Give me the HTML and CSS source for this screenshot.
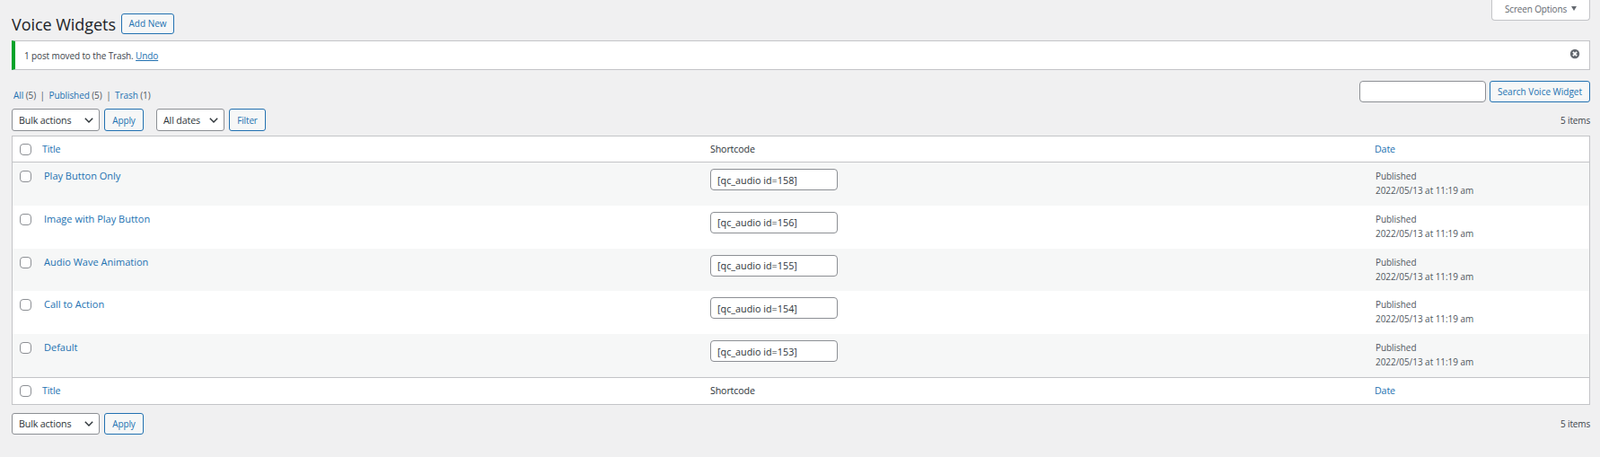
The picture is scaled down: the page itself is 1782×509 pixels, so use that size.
FILE: index.html
```html
<!DOCTYPE html>
<html lang="en">
<head>
<meta charset="utf-8">
<title>Voice Widgets</title>
<link rel="stylesheet" href="styles.css">
</head>
<body>
<div class="wrap">
  <div class="screen-meta"><button class="screen-tab">Screen Options <span class="tri"></span></button></div>
  <div class="heading">
    <h1>Voice Widgets</h1>
    <a class="btn btn-add" href="#">Add New</a>
  </div>
  <div class="notice">
    <p>1 post moved to the Trash. <a href="#">Undo</a></p>
    <svg class="dismiss" viewBox="0 0 12 12" width="12" height="12" aria-hidden="true"><circle cx="6" cy="6" r="5.2" fill="#646970"/><path d="M3.9 3.9l4.2 4.2M8.1 3.9l-4.2 4.2" stroke="#fff" stroke-width="1.7"/></svg>
  </div>
  <div class="filters-row">
    <ul class="subsub">
      <li><a href="#">All</a> <span class="count">(5)</span></li>
      <li class="sep">|</li>
      <li><a href="#">Published</a> <span class="count">(5)</span></li>
      <li class="sep">|</li>
      <li><a href="#">Trash</a> <span class="count">(1)</span></li>
    </ul>
    <div class="search">
      <input class="search-input" type="text" aria-label="Search">
      <a class="btn btn-search" href="#">Search Voice Widget</a>
    </div>
  </div>
  <div class="tablenav tablenav-top">
    <div class="select select-bulk">Bulk actions<svg class="chev" viewBox="0 0 10 6" width="10" height="6"><path d="M.8.8L5 5l4.2-4.2" fill="none" stroke="#2c3338" stroke-width="1.4"/></svg></div>
    <a class="btn btn-apply" href="#">Apply</a>
    <div class="select select-dates">All dates<svg class="chev" viewBox="0 0 10 6" width="10" height="6"><path d="M.8.8L5 5l4.2-4.2" fill="none" stroke="#2c3338" stroke-width="1.4"/></svg></div>
    <a class="btn btn-filter" href="#">Filter</a>
    <span class="items">5 items</span>
  </div>
  <table class="list">
    <colgroup><col class="c-cb"><col class="c-title"><col class="c-code"><col class="c-date"></colgroup>
    <thead>
      <tr><th class="cb"><span class="check"></span></th><th><a href="#">Title</a></th><th>Shortcode</th><th><a href="#">Date</a></th></tr>
    </thead>
    <tbody>
      <tr class="alt"><td class="cb"><span class="check"></span></td><td class="name"><a href="#">Play Button Only</a></td><td class="code-cell"><input class="code" type="text" value="[qc_audio id=158]" readonly></td><td class="date">Published<br>2022/05/13 at 11:19 am</td></tr>
      <tr><td class="cb"><span class="check"></span></td><td class="name"><a href="#">Image with Play Button</a></td><td class="code-cell"><input class="code" type="text" value="[qc_audio id=156]" readonly></td><td class="date">Published<br>2022/05/13 at 11:19 am</td></tr>
      <tr class="alt"><td class="cb"><span class="check"></span></td><td class="name"><a href="#">Audio Wave Animation</a></td><td class="code-cell"><input class="code" type="text" value="[qc_audio id=155]" readonly></td><td class="date">Published<br>2022/05/13 at 11:19 am</td></tr>
      <tr><td class="cb"><span class="check"></span></td><td class="name"><a href="#">Call to Action</a></td><td class="code-cell"><input class="code" type="text" value="[qc_audio id=154]" readonly></td><td class="date">Published<br>2022/05/13 at 11:19 am</td></tr>
      <tr class="alt"><td class="cb"><span class="check"></span></td><td class="name"><a href="#">Default</a></td><td class="code-cell"><input class="code" type="text" value="[qc_audio id=153]" readonly></td><td class="date">Published<br>2022/05/13 at 11:19 am</td></tr>
    </tbody>
    <tfoot>
      <tr><th class="cb"><span class="check"></span></th><th><a href="#">Title</a></th><th>Shortcode</th><th><a href="#">Date</a></th></tr>
    </tfoot>
  </table>
  <div class="tablenav tablenav-bottom">
    <div class="select select-bulk">Bulk actions<svg class="chev" viewBox="0 0 10 6" width="10" height="6"><path d="M.8.8L5 5l4.2-4.2" fill="none" stroke="#2c3338" stroke-width="1.4"/></svg></div>
    <a class="btn btn-apply" href="#">Apply</a>
    <span class="items">5 items</span>
  </div>
</div>
</body>
</html>
```
FILE: styles.css
```css
* { box-sizing: border-box; }
html, body { margin: 0; padding: 0; }
body {
  background: #f0f0f1;
  color: #3c434a;
  font-family: "Open Sans", "Noto Sans", sans-serif;
  font-size: 10px;
  letter-spacing: -0.15px;
  height: 509px;
  overflow: hidden;
}
a { color: #2271b1; text-decoration: none; }
.wrap { padding: 0 11px 0 13px; }

.screen-meta { display: flex; justify-content: flex-end; height: 0; }
.screen-tab {
  width: 110px; height: 23px; background: #fff; color: #646970;
  border: 1px solid #c3c4c7; border-top: 0; border-radius: 0 0 4px 4px;
  font: inherit; letter-spacing: inherit; padding: 0 0 3px 0; display: flex; align-items: center; justify-content: center; gap: 5px;
}
.tri { width: 0; height: 0; border-left: 3.5px solid transparent; border-right: 3.5px solid transparent; border-top: 5px solid #646970; }

.heading { display: flex; align-items: center; height: 45px; padding-top: 7px; }
h1 { margin: 2px 0 0 0; font-size: 18px; font-weight: 400; letter-spacing: -0.05px; color: #1d2327; line-height: 24px; width: 122px; white-space: nowrap; }

.btn {
  display: flex; align-items: center; justify-content: center;
  border: 1px solid #2271b1; border-radius: 3px; background: #f6f7f7; color: #2271b1;
  white-space: nowrap;
}
.btn-add { width: 59px; height: 23px; letter-spacing: 0; }
.notice {
  height: 33px; background: #fff; border: 1px solid #c3c4c7; border-left: 4px solid #00a32a;
  display: flex; align-items: center; justify-content: space-between; padding: 0 10px 3px 10px;
}
.notice p { margin: 4px 0 0 0; letter-spacing: -0.12px; }
.notice a { text-decoration: underline; }

.filters-row { display: flex; justify-content: space-between; height: 43px; padding-top: 12px; }
.subsub { list-style: none; display: flex; gap: 4.5px; margin: 7px 0 0 2px; padding: 0; line-height: 19px; height: 19px; letter-spacing: -0.08px; }
.count { color: #50575e; }
.sep { color: #50575e; }
.search { display: flex; gap: 4px; height: 24px; }
.search-input { width: 141px; height: 24px; border: 1px solid #8c8f94; border-radius: 4px; background: #fff; }
.btn-search { width: 112px; height: 24px; letter-spacing: -0.02px; }

.tablenav { display: flex; align-items: center; }
.tablenav-top { height: 25px; margin-bottom: 5px; }
.tablenav-bottom { height: 24px; margin-top: 9px; }
.select {
  height: 100%; background: #fff; border: 1px solid #8c8f94; border-radius: 3px;
  color: #2c3338; font-size: 10.7px; display: flex; align-items: center; justify-content: space-between; padding: 0 6px 0 7px;
}
.select-bulk { width: 98px; }
.select-dates { width: 76px; margin-left: 14px; }
.btn-apply { width: 44px; height: 100%; margin-left: 5px; }
.btn-filter { width: 41px; height: 100%; margin-left: 5px; }
.items { margin-left: auto; }

.list {
  width: 100%; table-layout: fixed; border-collapse: separate; border-spacing: 0;
  background: #fff; border: 1px solid #c3c4c7;
}
.c-cb { width: 25px; }
.c-title { width: 742px; }
.c-code { width: 740px; }
.list th, .list td { padding: 0 0 0 10px; text-align: left; font-weight: 400; vertical-align: top; }
.list th { font-size: 10.7px; color: #2c3338; height: 29px; vertical-align: middle; }
.list thead th { border-bottom: 1px solid #c3c4c7; }
.list tfoot th { border-top: 1px solid #c3c4c7; height: 30px; }
.list th:nth-child(2) { padding-left: 8px; }
.list th.cb { padding: 0 0 0 8px; }
.list tbody tr { height: 47.8px; }
.alt td { background: #f6f7f7; }
.list td { padding-top: 7px; }
.list td.cb { padding: 9px 0 0 8px; }
.name { font-size: 11px; line-height: 15px; letter-spacing: 0; }
.name a { font-weight: 500; }
.list td.date { padding-left: 11px; letter-spacing: -0.05px; }
.code {
  width: 142px; height: 24px; border: 1px solid #8c8f94; border-radius: 4px; background: #fff;
  font: inherit; font-size: 10.8px; color: #2c3338; padding: 0 7px; display: block;
}
.date { line-height: 16px; color: #50575e; }
.check { display: block; width: 13px; height: 13px; background: #fff; border: 1px solid #8c8f94; border-radius: 4px; }
```
